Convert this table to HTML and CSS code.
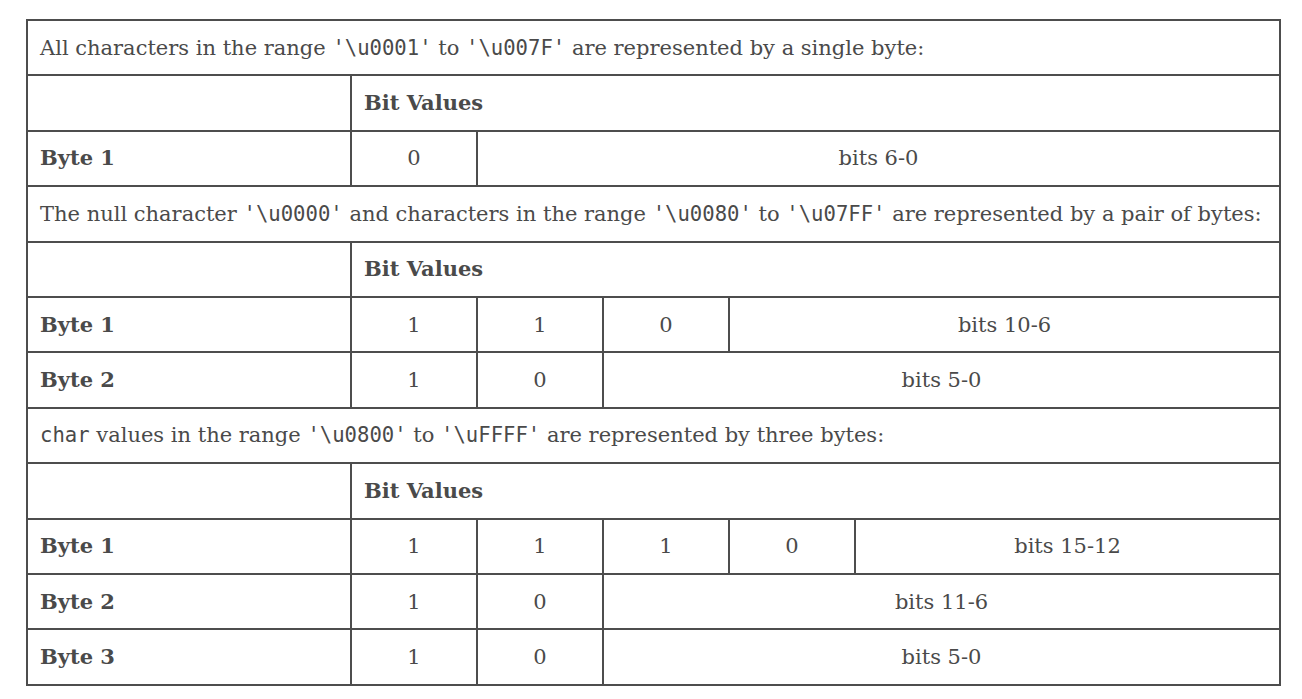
FILE: index.html
```html
<!DOCTYPE html>
<html>
<head>
<meta charset="utf-8">
<link rel="stylesheet" href="styles.css">
</head>
<body>
<table class="enc">
  <colgroup>
    <col class="c-label"><col class="c-bit"><col class="c-bit"><col class="c-bit"><col class="c-bit"><col class="c-rest">
  </colgroup>
  <tbody>
    <tr><td colspan="6">All characters in the range <code>'\u0001'</code> to <code>'\u007F'</code> are represented by a single byte:</td></tr>
    <tr><th></th><th colspan="5">Bit Values</th></tr>
    <tr><th>Byte 1</th><td class="ctr">0</td><td class="ctr" colspan="4">bits 6-0</td></tr>
    <tr><td colspan="6">The null character <code>'\u0000'</code> and characters in the range <code>'\u0080'</code> to <code>'\u07FF'</code> are represented by a pair of bytes:</td></tr>
    <tr><th></th><th colspan="5">Bit Values</th></tr>
    <tr><th>Byte 1</th><td class="ctr">1</td><td class="ctr">1</td><td class="ctr">0</td><td class="ctr" colspan="2">bits 10-6</td></tr>
    <tr><th>Byte 2</th><td class="ctr">1</td><td class="ctr">0</td><td class="ctr" colspan="3">bits 5-0</td></tr>
    <tr><td colspan="6"><code>char</code> values in the range <code>'\u0800'</code> to <code>'\uFFFF'</code> are represented by three bytes:</td></tr>
    <tr><th></th><th colspan="5">Bit Values</th></tr>
    <tr><th>Byte 1</th><td class="ctr">1</td><td class="ctr">1</td><td class="ctr">1</td><td class="ctr">0</td><td class="ctr">bits 15-12</td></tr>
    <tr><th>Byte 2</th><td class="ctr">1</td><td class="ctr">0</td><td class="ctr" colspan="3">bits 11-6</td></tr>
    <tr><th>Byte 3</th><td class="ctr">1</td><td class="ctr">0</td><td class="ctr" colspan="3">bits 5-0</td></tr>
  </tbody>
</table>
</body>
</html>
```

FILE: styles.css
```css
html, body {
  margin: 0;
  padding: 0;
  background: #ffffff;
}
body {
  padding: 19px 0 0 26px;
  font-family: "DejaVu Serif", serif;
  font-size: 21px;
  color: #4a4a4a;
}
.enc {
  border-collapse: collapse;
  table-layout: fixed;
  width: 1255px;
  border: 2px solid #4d4d4d;
}
.c-label { width: 324px; }
.c-bit { width: 126px; }
.c-rest { width: auto; }
.enc td, .enc th {
  border: 2px solid #4d4d4d;
  padding: 0 12px;
  height: 53.4px;
  line-height: 24px;
  text-align: left;
  vertical-align: middle;
}
.enc th {
  font-weight: bold;
}
.enc .ctr {
  text-align: center;
}
code {
  font-family: "DejaVu Sans Mono", monospace;
  font-size: 20.6px;
  color: #4a4a4a;
}
```
